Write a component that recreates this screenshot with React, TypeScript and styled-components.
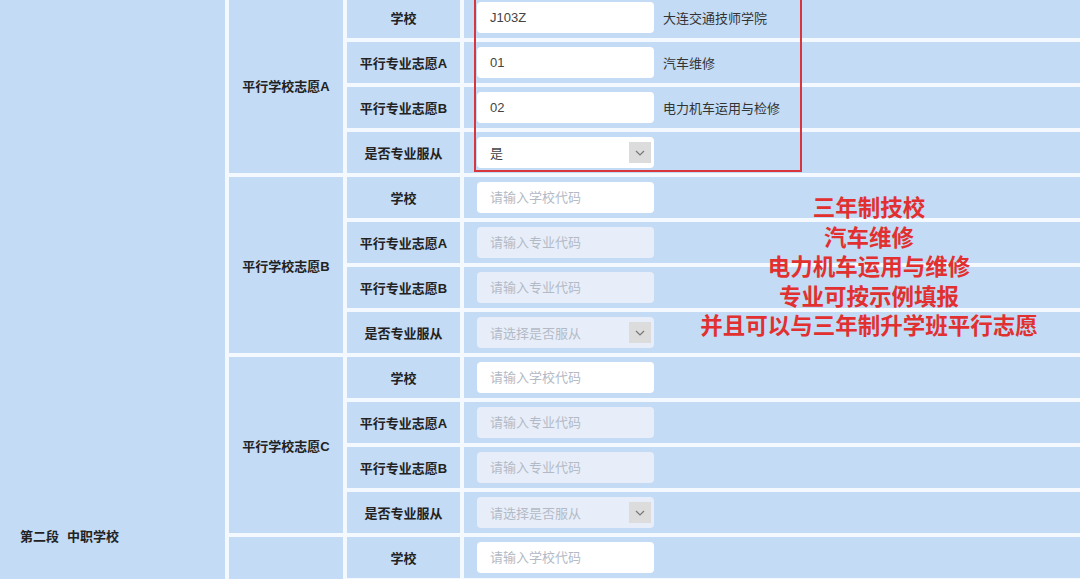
import React from 'react';
import styled, { createGlobalStyle } from 'styled-components';

const GlobalStyle = createGlobalStyle`
    html, body {
        margin: 0;
        padding: 0;
        overflow: hidden;
        background: #f4f9ff;
        font-family: "Liberation Sans", "Noto Sans CJK SC", sans-serif;
    }
`;

const Page = styled.div`
    position: relative;
    width: 1080px;
    height: 579px;
    overflow: hidden;
`;

const Table = styled.div`
    display: grid;
    grid-template-columns: 225px 1fr;
    gap: 4px;
    margin-top: -3px;
`;

const Cell = styled.div`
    background: #c3dbf5;
    color: #222;
    font-size: 13px;
    font-weight: 700;
    display: flex;
    align-items: center;
`;

const StageCell = styled(Cell)`
    padding-left: 20px;
    gap: 8px;
`;

const Groups = styled.div`
    display: flex;
    flex-direction: column;
    gap: 4px;
`;

const Group = styled.div`
    display: grid;
    grid-template-columns: 114px 1fr;
    gap: 4px;
`;

const CenterCell = styled(Cell)`
    justify-content: center;
`;

const Rows = styled.div`
    display: flex;
    flex-direction: column;
    gap: 4px;
`;

const Row = styled.div`
    display: grid;
    grid-template-columns: 113px 1fr;
    gap: 4px;
    height: 41px;
`;

const FieldCell = styled(Cell)`
    padding-left: 13px;
    gap: 9px;
    font-weight: 400;
`;

const Input = styled.input<{ $disabled?: boolean }>`
    box-sizing: border-box;
    width: 177px;
    height: 31px;
    border: none;
    border-radius: 4px;
    padding: 0 13px;
    font-family: "Liberation Sans", "Noto Sans CJK SC", sans-serif;
    font-size: 13px;
    color: #444;
    outline: none;
    background: ${p => (p.$disabled ? '#e7eef9' : '#ffffff')};

    &::placeholder {
        color: #b3bac6;
    }
`;

const Select = styled.div<{ $disabled?: boolean; $empty?: boolean }>`
    box-sizing: border-box;
    width: 177px;
    height: 31px;
    border-radius: 4px;
    padding: 0 3px 0 13px;
    display: flex;
    align-items: center;
    justify-content: space-between;
    font-size: 13px;
    color: ${p => (p.$empty ? '#b3bac6' : '#444')};
    background: ${p => (p.$disabled ? '#e7eef9' : '#ffffff')};
`;

const Caret = styled.span`
    width: 22px;
    height: 21px;
    background: #dcdcdc;
    display: flex;
    align-items: center;
    justify-content: center;
`;

const Hint = styled.span`
    color: #333;
    font-size: 13px;
`;

const Highlight = styled.div`
    position: absolute;
    left: 474px;
    top: -4px;
    width: 328px;
    height: 176px;
    border: 2px solid #d8363d;
    box-sizing: border-box;
    pointer-events: none;
`;

const Note = styled.div`
    position: absolute;
    left: 669px;
    top: 192px;
    width: 400px;
    text-align: center;
    color: #e1302f;
    font-family: "Noto Sans CJK SC", sans-serif;
    font-size: 22.5px;
    font-weight: 700;
    line-height: 29.5px;
`;

const Chevron = () => (
    <svg width="12" height="12" viewBox="0 0 12 12">
        <polyline points="2,4 6,8 10,4" fill="none" stroke="#777" strokeWidth="1.2" />
    </svg>
);

type Filled = { school?: [string, string]; a?: [string, string]; b?: [string, string]; follow?: string };

const groups: { name: string; filled?: Filled }[] = [
    {
        name: '平行学校志愿A',
        filled: {
            school: ['J103Z', '大连交通技师学院'],
            a: ['01', '汽车维修'],
            b: ['02', '电力机车运用与检修'],
            follow: '是',
        },
    },
    { name: '平行学校志愿B' },
    { name: '平行学校志愿C' },
    { name: '平行学校志愿D' },
    { name: '平行学校志愿E' },
    { name: '平行学校志愿F' },
];

const CodeField: React.FC<{ value?: [string, string]; placeholder: string; disabled?: boolean }> = ({
    value,
    placeholder,
    disabled,
}) => (
    <FieldCell>
        <Input readOnly value={value ? value[0] : ''} placeholder={placeholder} $disabled={disabled} />
        {value && <Hint>{value[1]}</Hint>}
    </FieldCell>
);

const App: React.FC = () => {
    return (
        <Page>
            <GlobalStyle />
            <Table>
                <StageCell>
                    <span>第二段</span>
                    <span>中职学校</span>
                </StageCell>
                <Groups>
                    {groups.map(g => {
                        const f = g.filled;
                        return (
                            <Group key={g.name}>
                                <CenterCell>{g.name}</CenterCell>
                                <Rows>
                                    <Row>
                                        <CenterCell>学校</CenterCell>
                                        <CodeField value={f?.school} placeholder="请输入学校代码" />
                                    </Row>
                                    <Row>
                                        <CenterCell>平行专业志愿A</CenterCell>
                                        <CodeField value={f?.a} placeholder="请输入专业代码" disabled={!f} />
                                    </Row>
                                    <Row>
                                        <CenterCell>平行专业志愿B</CenterCell>
                                        <CodeField value={f?.b} placeholder="请输入专业代码" disabled={!f} />
                                    </Row>
                                    <Row>
                                        <CenterCell>是否专业服从</CenterCell>
                                        <FieldCell>
                                            <Select $disabled={!f} $empty={!f}>
                                                <span>{f ? f.follow : '请选择是否服从'}</span>
                                                <Caret>
                                                    <Chevron />
                                                </Caret>
                                            </Select>
                                        </FieldCell>
                                    </Row>
                                </Rows>
                            </Group>
                        );
                    })}
                </Groups>
            </Table>
            <Highlight />
            <Note>
                <div>三年制技校</div>
                <div>汽车维修</div>
                <div>电力机车运用与维修</div>
                <div>专业可按示例填报</div>
                <div>并且可以与三年制升学班平行志愿</div>
            </Note>
        </Page>
    );
};

export default App;
